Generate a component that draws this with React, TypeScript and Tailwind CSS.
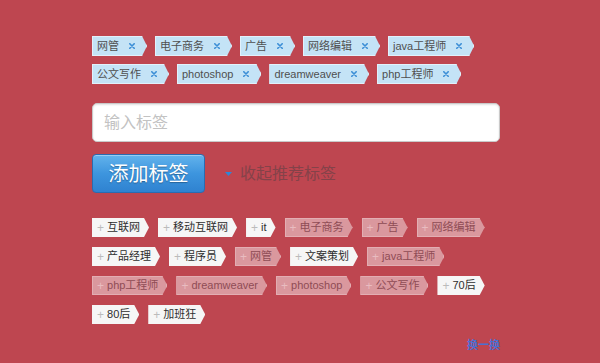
import { useState } from 'react';

interface Tag {
  name: string;
  added?: boolean;
}

const ARROW = '[clip-path:polygon(0_0,calc(100%_-_5px)_0,100%_50%,calc(100%_-_5px)_100%,0_100%)]';

const myTags = ['网管', '电子商务', '广告', '网络编辑', 'java工程师', '公文写作', 'photoshop', 'dreamweaver', 'php工程师'];

const suggested: Tag[] = [
  { name: '互联网' },
  { name: '移动互联网' },
  { name: 'it' },
  { name: '电子商务', added: true },
  { name: '广告', added: true },
  { name: '网络编辑', added: true },
  { name: '产品经理' },
  { name: '程序员' },
  { name: '网管', added: true },
  { name: '文案策划' },
  { name: 'java工程师', added: true },
  { name: 'php工程师', added: true },
  { name: 'dreamweaver', added: true },
  { name: 'photoshop', added: true },
  { name: '公文写作', added: true },
  { name: '70后' },
  { name: '80后' },
  { name: '加班狂' },
];

export default function App() {
  const [value, setValue] = useState('');

  return (
    <div className="w-[600px] h-[363px] bg-[#be4650] pl-[92px] pt-[36px] font-['Liberation_Sans','Noto_Sans_CJK_SC',sans-serif] overflow-hidden">
      <div className="w-[408px]">
        {/* selected tags */}
        <div className="flex flex-wrap gap-x-[8px] gap-y-[8px]">
          {myTags.map((t) => (
            <div
              key={t}
              className={`h-[20px] flex items-center bg-[#c4e3f6] pl-[5px] pr-[12px] shadow-[inset_0_0_0_1px_#e2f1fb] ${ARROW}`}
            >
              <span className="text-[11px] text-[#4f4f4f] leading-none">{t}</span>
              <svg className="ml-[10px] w-[6px] h-[6px]" viewBox="0 0 6 6">
                <path d="M0.8 0.8 L5.2 5.2 M5.2 0.8 L0.8 5.2" stroke="#3b8ed6" strokeWidth="1.6" strokeLinecap="round" />
              </svg>
            </div>
          ))}
        </div>

        {/* input */}
        <input
          value={value}
          onChange={(e) => setValue(e.target.value)}
          placeholder="输入标签"
          className="mt-[19px] w-[408px] h-[39px] bg-white rounded-[5px] border border-[#c9c9c9] shadow-[inset_0_1px_2px_rgba(0,0,0,0.12)] pl-[11px] text-[16px] text-[#333] placeholder:text-[#c2c2c2] outline-none"
        />

        {/* actions */}
        <div className="mt-[12px] flex items-center">
          <button className="w-[113px] h-[39px] rounded-[4px] border border-[#2a6bb0] bg-gradient-to-b from-[#62b3ec] via-[#3d95de] to-[#2f82d0] shadow-[inset_0_1px_0_rgba(255,255,255,0.35)] text-white text-[20px] [text-shadow:0_1px_1px_rgba(0,0,0,0.3)]">
            添加标签
          </button>
          <svg className="ml-[20px] w-[7px] h-[4px]" viewBox="0 0 7 4">
            <path d="M0 0 L7 0 L3.5 4 Z" fill="#2f86d6" />
          </svg>
          <span className="ml-[8px] text-[16px] text-[#844249]">收起推荐标签</span>
        </div>

        {/* suggested tags */}
        <div className="mt-[25px] flex flex-wrap gap-x-[9px] gap-y-[10px]">
          {suggested.map((t) => (
            <div
              key={t.name}
              className={`h-[19px] flex items-center pl-[5px] pr-[9px] ${ARROW} ${
                t.added ? 'bg-[#da989e] shadow-[inset_0_0_0_1px_#e3aeb3]' : 'bg-[#f6f6f6]'
              }`}
            >
              <span className={`text-[12px] leading-none ${t.added ? 'text-[#e9bcc0]' : 'text-[#bbb]'}`}>+</span>
              <span className={`ml-[3px] text-[11px] leading-none ${t.added ? 'text-[#8f4c55]' : 'text-[#2e2e2e]'}`}>
                {t.name}
              </span>
            </div>
          ))}
        </div>
      </div>

      <div className="w-[408px] flex justify-end mt-[13px]">
        <span className="text-[11px] text-[#4a6fd2] font-bold">换一换</span>
      </div>
    </div>
  );
}
